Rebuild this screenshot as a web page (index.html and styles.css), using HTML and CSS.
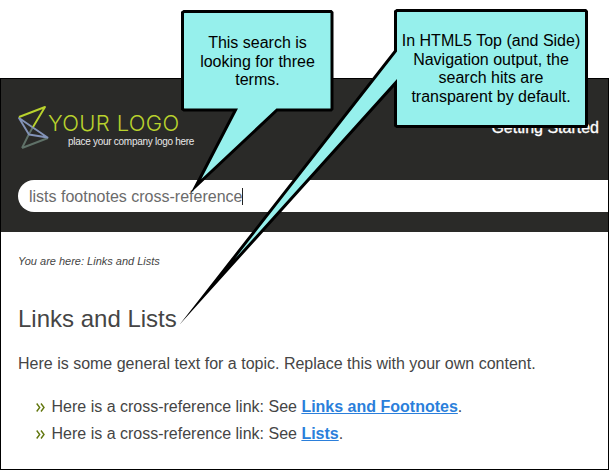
FILE: index.html
```html
<!DOCTYPE html>
<html lang="en">
<head>
<meta charset="utf-8">
<title>Links and Lists</title>
<link rel="stylesheet" href="styles.css">
</head>
<body>
<div class="window">
  <header class="header">
    <div class="topbar">
      <div class="brand">
        <svg class="mark" width="32" height="44" viewBox="0 0 32 44" fill="none" stroke-width="1.9" stroke-linejoin="round">
          <path d="M4 42 L11 28 L15 21 M4 42 L30 32" stroke="#5f7168"/>
          <path d="M1 12 L11 28.500 L29.500 31.500 Z" stroke="#8393b8"/>
          <path d="M1 11 L27 1 L15 21" stroke="#b9d22d"/>
        </svg>
        <div class="brand-text">
          <span class="brand-name">YOUR LOGO</span>
          <span class="brand-tag">place your company logo here</span>
        </div>
      </div>
      <nav class="nav"><span>Getting Started</span></nav>
    </div>
    <div class="search"><span class="query">lists footnotes cross-reference</span><i class="caret"></i></div>
  </header>
  <main class="content">
    <div class="crumbs">You are here: Links and Lists</div>
    <h1>Links and Lists</h1>
    <p>Here is some general text for a topic. Replace this with your own content.</p>
    <ul>
      <li><svg width="9" height="9" viewBox="0 0 9 9"><path d="M.7 .5 L3.700 4.500 L.7 8.500 M5 .5 L8 4.500 L5 8.500"/></svg><span>Here is a cross-reference link: See <a>Links and Footnotes</a>.</span></li>
      <li><svg width="9" height="9" viewBox="0 0 9 9"><path d="M.7 .5 L3.700 4.500 L.7 8.500 M5 .5 L8 4.500 L5 8.500"/></svg><span>Here is a cross-reference link: See <a>Lists</a>.</span></li>
    </ul>
  </main>
</div>
<svg class="balloons" width="609" height="470" viewBox="0 0 609 470">
  <path d="M184 11.500 H331 L332 12.500 V109 L331 110 H277 L196 186 L235.500 110 H184 L182.500 109 V12.500 Z"/>
  <path d="M397 10.500 H585.500 L586.500 11.500 V125.500 L585.500 126.500 H397 L395.500 125.500 V83 L207 292 L395.500 51 V11.500 Z"/>
</svg>
<div class="note note-search"><span>This search is</span><span>looking for three</span><span>terms.</span></div>
<div class="note note-output"><span>In HTML5 Top (and Side)</span><span>Navigation output, the</span><span>search hits are</span><span>transparent by default.</span></div>
</body>
</html>
```

FILE: styles.css
```css
* { box-sizing: border-box; }
body {
  margin: 0;
  padding-top: 78px;
  height: 470px;
  overflow: hidden;
  background: #fff;
  font: 16px/20px "Liberation Sans", Arial, sans-serif;
  color: #454545;
}
.window { height: 392px; border: 1px solid #000; }
.header { height: 153px; background: #2a2a28; padding: 27px 0 0 17px; }
.topbar { display: flex; justify-content: space-between; height: 74px; }
.brand { display: flex; }
.brand-text { display: flex; flex-direction: column; padding-top: 4px; margin-left: -2px; white-space: nowrap; }
.brand-name { font: 300 22px/26px Inter, sans-serif; color: #b9d22d; letter-spacing: 0.35px; }
.brand-tag { font: 10px/14px "Liberation Sans", sans-serif; color: #e8e8e8; margin: -1px 0 0 20px; letter-spacing: -0.28px; }
.nav { font-size: 16px; color: #fff; padding: 12px 9px 0 0; -webkit-text-stroke: .3px #fff; }
.search { height: 32px; border-radius: 16px 0 0 16px; background: #fff; display: flex; align-items: center; padding-left: 11px; color: #6b6b6b; }
.query { padding-top: 1px; }
.caret { width: 1px; height: 17px; background: #222; }
.content { padding: 21px 17px 0; }
.crumbs { font-size: 11px; line-height: 16px; font-style: italic; }
h1 { margin: 36px 0 0; font-size: 24px; line-height: 28px; font-weight: normal; }
p { margin: 21px 0 0; white-space: nowrap; }
ul { list-style: none; margin: 19px 0 0; padding: 0 0 0 18px; }
li { display: flex; align-items: center; height: 27px; gap: 6.5px; white-space: nowrap; }
li svg { margin-top: 2px; fill: none; stroke: #61760d; stroke-width: 1.4; }
a { color: #2b7fdb; font-weight: bold; text-decoration: underline; }
.balloons { position: absolute; left: 0; top: 0; fill: #96f0ec; stroke: #000; stroke-width: 3; stroke-miterlimit: 40; }
.note { position: absolute; display: flex; flex-direction: column; align-items: center; color: #000; line-height: 18.5px; white-space: nowrap; }
.note-search { left: 183px; top: 34px; width: 149px; }
.note-output { left: 396px; top: 32px; width: 190px; }
```
